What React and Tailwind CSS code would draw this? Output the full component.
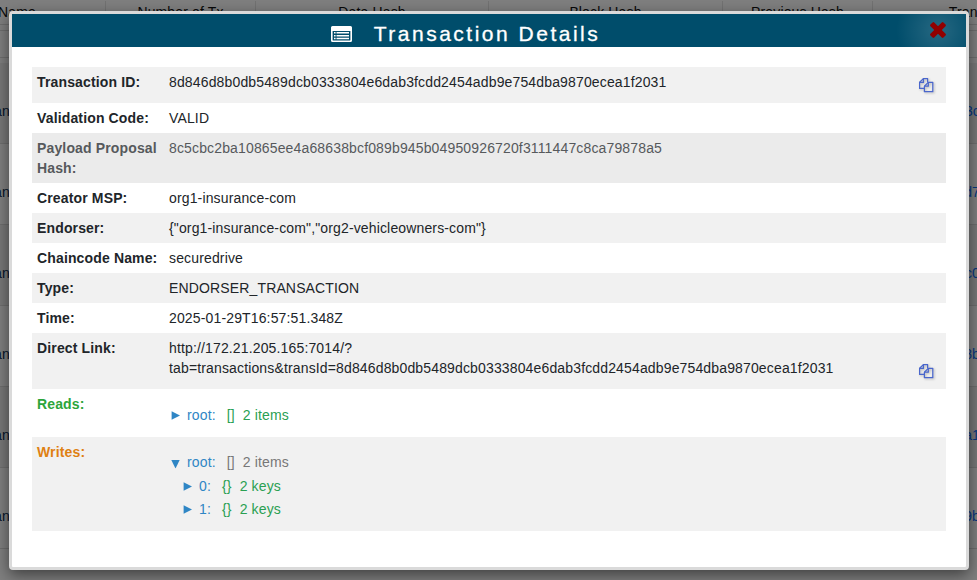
import React from "react";

const HEADERS = [
  { label: "Name", width: "w-[177px]" },
  { label: "Number of Tx", width: "w-[150px]" },
  { label: "Data Hash", width: "w-[233px]" },
  { label: "Block Hash", width: "w-[234px]" },
  { label: "Previous Hash", width: "w-[150px]" },
  { label: "Transactions", width: "w-[234px]" },
];

const BLOCKS = ["3c", "d7", "c0", "8b", "a1", "9b"];

function BlockTable() {
  return (
    <div className="h-[580px] w-[977px] overflow-hidden bg-white text-[14px] leading-5 tracking-[0.14px] text-[#111]">
      <div className="-ml-[71px] flex h-[25px] w-[1178px] border-b border-[#ddd] pt-[1px]">
        {HEADERS.map((h) => (
          <div key={h.label} className={`${h.width} shrink-0 border-r border-[#e4e4e4] text-center leading-[22px]`}>
            {h.label}
          </div>
        ))}
      </div>
      <div className="mt-[5px] h-[28px] border-y border-[#ddd]" />
      <div className="mt-[5px]">
        {BLOCKS.map((b) => (
          <div key={b} className="flex h-[81px] justify-between border-b border-[#ddd] pt-[38px] odd:bg-[#f0f0f0]">
            <span className="-ml-[6px] text-[#0a2a50]">an</span>
            <span className="-mr-[3px] text-[#0d6efd]">{b}</span>
          </div>
        ))}
      </div>
    </div>
  );
}

function ListIcon() {
  return (
    <svg className="h-[16px] w-[21px]" viewBox="0 0 21 16" fill="white">
      <path
        fillRule="evenodd"
        d="M1.5 0h18A1.5 1.5 0 0 1 21 1.5v13a1.5 1.5 0 0 1-1.5 1.5h-18A1.5 1.5 0 0 1 0 14.5v-13A1.5 1.5 0 0 1 1.5 0zM1.6 5v9c0 .2.2.4.4.4h17c.2 0 .4-.2.4-.4V5z"
      />
      <path d="M3 6h1.6v1.6H3zM3 8.9h1.6v1.6H3zM3 11.7h1.6v1.6H3zM5.5 6H18v1.6H5.5zM5.5 8.9H18v1.6H5.5zM5.5 11.7H18v1.6H5.5z" />
    </svg>
  );
}

function CloseIcon() {
  return (
    <svg className="h-[18px] w-[18px]" viewBox="0 0 18 18" fill="#910000">
      <rect x="-0.2" y="6.3" width="18.4" height="5.4" rx="1.2" transform="rotate(45 9 9)" />
      <rect x="-0.2" y="6.3" width="18.4" height="5.4" rx="1.2" transform="rotate(-45 9 9)" />
    </svg>
  );
}

function CopyIcon() {
  return (
    <svg
      className="mr-[12px] mb-[10px] h-[15px] w-[15px] shrink-0 self-end drop-shadow-[1px_1px_1px_rgba(0,0,0,0.25)]"
      viewBox="0 0 15 15"
      fill="none"
      stroke="#4966cc"
      strokeWidth="1.25"
      strokeLinejoin="round"
    >
      <path d="M5.4 10.4H.6V4.3L4.4.6h4.2v3.6" />
      <path d="M.6 4.4h3.8V.6" />
      <path d="M5.4 8.2l3.8-3.8h4.6v9.3H5.4z" />
      <path d="M5.4 8.2h3.9V4.4" />
    </svg>
  );
}

function Row({ label, height, shade = "", labelColor = "text-[#212529]", copy, children }) {
  return (
    <div className={`flex ${height} ${shade}`}>
      <div className={`w-[132px] shrink-0 pt-[5px] pl-[5px] font-bold ${labelColor}`}>{label}</div>
      <div className="flex-1 pt-[5px] pl-[5px]">{children}</div>
      {copy && <CopyIcon />}
    </div>
  );
}

function Node({ open, name, type, info, indent = "", color = "text-[#2aa052]" }) {
  return (
    <div className={`flex h-[23.5px] items-center ${indent}`}>
      <svg className={`h-[9px] w-[9px] ${open ? "translate-y-[2.5px] rotate-90" : "translate-y-px"}`} viewBox="0 0 9 9" fill="#2f86c5">
        <path d="M0.6 0.3L9 4.5L0.6 8.7z" />
      </svg>
      <span className="ml-[7px] text-[#2f86c5]">{name}:</span>
      <span className={`ml-[11px] ${color}`}>{type}</span>
      <span className={`ml-[8px] ${color}`}>{info}</span>
    </div>
  );
}

export default function App() {
  const grey = "bg-[#f1f1f1]";
  return (
    <div className="relative h-[580px] w-[977px] overflow-hidden font-['Liberation_Sans',Arial,sans-serif]">
      <BlockTable />
      <div className="absolute inset-0 bg-black/50" />
      <div className="absolute top-[11px] left-[9px] h-[559px] w-[960px] rounded-[4px] border-[3px] border-[#dadada] bg-white text-[14px] leading-5 tracking-[0.145px] text-[#212529] shadow-[0_5px_15px_rgba(0,0,0,0.5)]">
        <div className="relative flex h-[33px] items-center justify-center overflow-hidden bg-[#004d6b] pt-[7px] pr-[47px] text-white">
          <ListIcon />
          <h1 className="ml-[22px] text-[21px] leading-[26px] tracking-[2.5px] [-webkit-text-stroke:0.3px_white]">
            Transaction Details
          </h1>
          <div className="absolute -top-[26px] right-[-14px] flex h-[84px] w-[84px] items-center justify-center bg-radial from-white/15 to-transparent to-70%">
            <CloseIcon />
          </div>
        </div>
        <div className="mx-[20px] mt-[20px]">
          <Row label="Transaction ID:" height="h-[36px]" shade={grey} copy>
            8d846d8b0db5489dcb0333804e6dab3fcdd2454adb9e754dba9870ecea1f2031
          </Row>
          <Row label="Validation Code:" height="h-[30px]">VALID</Row>
          <Row label="Payload Proposal Hash:" height="h-[50px]" shade="bg-[#ebebeb]" labelColor="text-[#56595c]">
            <span className="text-[#56595c]">8c5cbc2ba10865ee4a68638bcf089b945b04950926720f3111447c8ca79878a5</span>
          </Row>
          <Row label="Creator MSP:" height="h-[30px]">org1-insurance-com</Row>
          <Row label="Endorser:" height="h-[30px]" shade={grey}>{'{"org1-insurance-com","org2-vehicleowners-com"}'}</Row>
          <Row label="Chaincode Name:" height="h-[30px]">securedrive</Row>
          <Row label="Type:" height="h-[30px]" shade={grey}>ENDORSER_TRANSACTION</Row>
          <Row label="Time:" height="h-[30px]">2025-01-29T16:57:51.348Z</Row>
          <Row label="Direct Link:" height="h-[56px]" shade={grey} copy>
            http://172.21.205.165:7014/?
            <br />
            tab=transactions&amp;transId=8d846d8b0db5489dcb0333804e6dab3fcdd2454adb9e754dba9870ecea1f2031
          </Row>
          <Row label="Reads:" height="h-[48px]" labelColor="text-[#2ca53a]">
            <div className="pt-[9px] pl-[2px]">
              <Node name="root" type="[]" info="2 items" />
            </div>
          </Row>
          <Row label="Writes:" height="h-[94px]" shade={grey} labelColor="text-[#df8012]">
            <div className="pt-[8px] pl-[2px]">
              <Node open name="root" type="[]" info="2 items" color="text-[#777]" />
              <Node name="0" type="{}" info="2 keys" indent="pl-[12px] pt-px" />
              <Node name="1" type="{}" info="2 keys" indent="pl-[12px]" />
            </div>
          </Row>
        </div>
      </div>
    </div>
  );
}
